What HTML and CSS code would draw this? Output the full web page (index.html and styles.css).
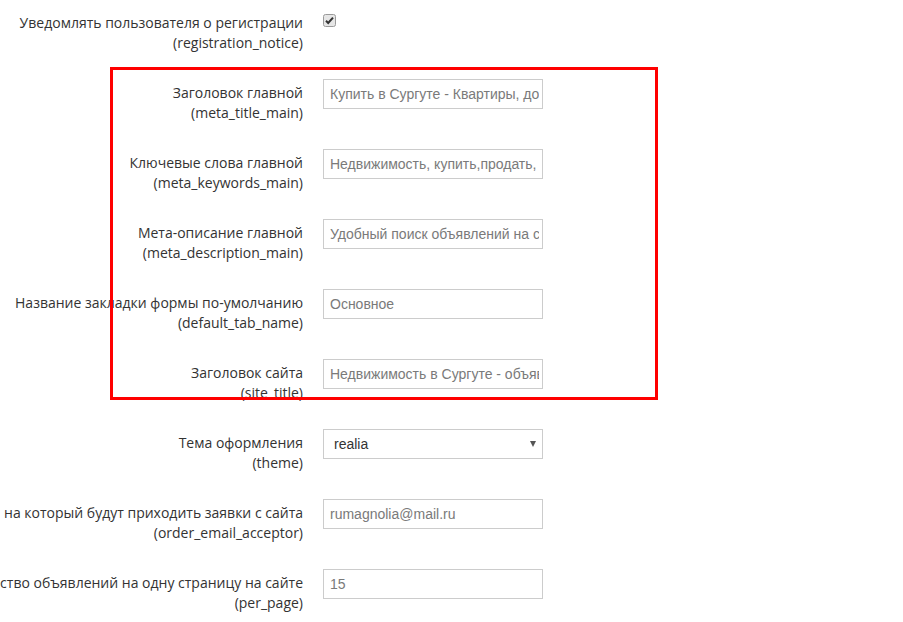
FILE: index.html
```html
<!DOCTYPE html>
<html lang="ru">
<head>
<meta charset="utf-8">
<title>Настройки</title>
<link rel="stylesheet" href="styles.css">
</head>
<body>
<div class="page">
  <form class="form">
    <div class="row">
      <div class="label"><span>Уведомлять пользователя о регистрации</span><span>(registration_notice)</span></div>
      <div class="field"><span class="check"><svg width="13" height="13" viewBox="0 0 13 13"><rect x="0.5" y="0.5" width="12" height="12" rx="2" fill="#e6e6e6" stroke="#9a9a9a"/><path d="M3 6.8 L5.2 9 L10 3.6" fill="none" stroke="#333" stroke-width="2"/></svg></span></div>
    </div>
    <div class="row">
      <div class="label"><span>Заголовок главной</span><span>(meta_title_main)</span></div>
      <div class="field"><input class="input" type="text" value="Купить в Сургуте - Квартиры, дома"></div>
    </div>
    <div class="row">
      <div class="label"><span>Ключевые слова главной</span><span>(meta_keywords_main)</span></div>
      <div class="field"><input class="input" type="text" value="Недвижимость, купить,продать, снять"></div>
    </div>
    <div class="row">
      <div class="label"><span>Мета-описание главной</span><span>(meta_description_main)</span></div>
      <div class="field"><input class="input" type="text" value="Удобный поиск объявлений на сайте"></div>
    </div>
    <div class="row">
      <div class="label"><span>Название закладки формы по-умолчанию</span><span>(default_tab_name)</span></div>
      <div class="field"><input class="input" type="text" value="Основное"></div>
    </div>
    <div class="row">
      <div class="label"><span>Заголовок сайта</span><span>(site_title)</span></div>
      <div class="field"><input class="input" type="text" value="Недвижимость в Сургуте - объявления"></div>
    </div>
    <div class="row">
      <div class="label"><span>Тема оформления</span><span>(theme)</span></div>
      <div class="field"><div class="select"><span>realia</span><span class="caret"></span></div></div>
    </div>
    <div class="row">
      <div class="label"><span>E-mail на который будут приходить заявки с сайта</span><span>(order_email_acceptor)</span></div>
      <div class="field"><input class="input" type="text" value="rumagnolia@mail.ru"></div>
    </div>
    <div class="row">
      <div class="label"><span>Количество объявлений на одну страницу на сайте</span><span>(per_page)</span></div>
      <div class="field"><input class="input" type="text" value="15"></div>
    </div>
  </form>
  <div class="highlight"></div>
</div>
</body>
</html>
```

FILE: styles.css
```css
html, body {
  margin: 0;
  padding: 0;
  background: #fff;
  overflow: hidden;
}
.page {
  position: relative;
  width: 903px;
  height: 622px;
  overflow: hidden;
  font-family: "Open Sans", "Liberation Sans", sans-serif;
  font-size: 14px;
  color: #333;
}
.form {
  display: flex;
  flex-direction: column;
  padding-top: 9px;
}
.row {
  display: flex;
  align-items: flex-start;
  height: 70px;
}
.label {
  width: 303px;
  flex: none;
  display: flex;
  flex-direction: column;
  align-items: flex-end;
  padding-top: 4px;
  line-height: 20px;
}
.label span {
  white-space: nowrap;
}
.field {
  margin-left: 20px;
}
.check {
  display: block;
  margin-top: 5px;
  width: 13px;
  height: 13px;
}
.check svg {
  display: block;
}
.input {
  box-sizing: border-box;
  width: 220px;
  height: 30px;
  margin: 0;
  padding: 0 3px 0 6px;
  border: 1px solid #ccc;
  border-radius: 0;
  font-family: "Liberation Sans", Arial, sans-serif;
  font-size: 14px;
  color: #7a7a7a;
  background: #fff;
  outline: none;
}
.select {
  box-sizing: border-box;
  width: 220px;
  height: 30px;
  border: 1px solid #ccc;
  display: flex;
  align-items: center;
  justify-content: space-between;
  padding: 0 6px 0 10px;
  font-family: "Liberation Sans", Arial, sans-serif;
  font-size: 14px;
  color: #333;
}
.caret {
  width: 0;
  height: 0;
  border-left: 3px solid transparent;
  border-right: 3px solid transparent;
  border-top: 6px solid #555;
}
.highlight {
  position: absolute;
  left: 110px;
  top: 67px;
  width: 542px;
  height: 327px;
  border: 3px solid #f00;
}
```
